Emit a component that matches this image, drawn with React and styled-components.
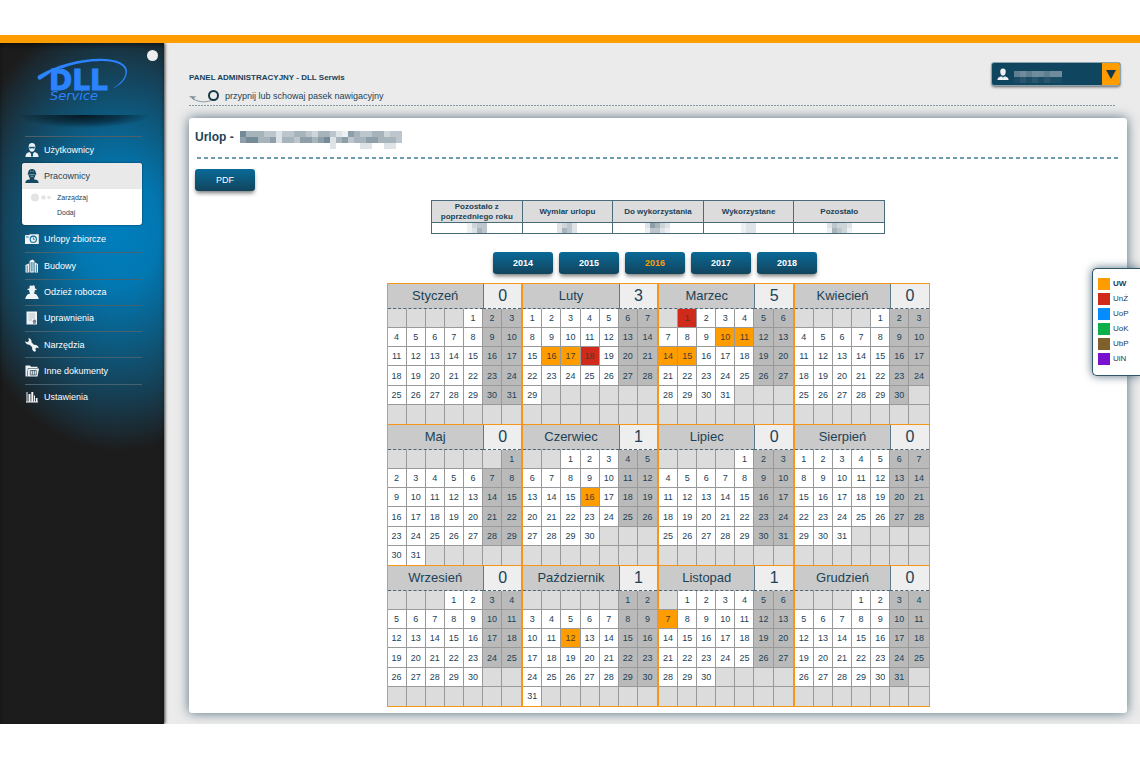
import React from "react";
import styled, { createGlobalStyle, css } from "styled-components";

const ink = "#1b4257";
const orange = "#ff9d00";
const gridOrange = "#f5951a";
const legendColors = {
  UW: orange,
  "UnŻ": "#cf2a1a",
  UoP: "#058cff",
  UoK: "#0bb04a",
  UbP: "#80602a",
  UiN: "#7812cf",
};

const Global = createGlobalStyle`
  * { box-sizing: border-box; }
  body {
    margin: 0;
    background: #fff;
    color: ${ink};
    font: 9px/12px "Liberation Sans", Arial, sans-serif;
  }
  button { font: inherit; color: inherit; border: 0; padding: 0; background: none; cursor: pointer; }
  h1, h2, p, ul { margin: 0; padding: 0; }
  ul { list-style: none; }
  a { color: inherit; text-decoration: none; }
  svg { display: block; flex: none; }
`;

const Page = styled.div`
  padding: 35px 0 36px;
`;

const Frame = styled.div`
  position: relative;
  display: flex;
  border-top: 8px solid ${orange};
  background: #ebebeb;
  overflow: hidden;
`;

const Sidebar = styled.aside`
  position: relative;
  flex: 0 0 164px;
  padding: 14px 22px 0 25px;
  background: radial-gradient(ellipse 160px 220px at 118px 188px, #007ebd 0%, #0278b2 25%, #0c5c83 50%, #163f54 75%, #1b282f 92%, #1c1c1c 100%) #1c1c1c;
  box-shadow: 1px 0 3px rgba(0, 0, 0, 0.75), inset 0 3px 4px rgba(0, 0, 0, 0.4);
`;

const Pin = styled.button`
  position: absolute;
  top: 7px;
  right: 6px;
  width: 11px;
  height: 11px;
  border-radius: 50%;
  background: #eee;
`;

const LogoLink = styled.a`
  display: block;
  margin-left: 11px;
`;

const LogoShade = styled.div`
  height: 14px;
  margin: 10px -10px 7px;
  background: radial-gradient(ellipse 66px 13px at 50% 0, rgba(5, 20, 28, 0.95), rgba(5, 20, 28, 0.5) 60%, transparent 100%);
`;

const Menu = styled.ul`
  border-top: 1px solid #4e5f69;
`;

const MenuItem = styled.li`
  color: #fff;
`;

const MenuLink = styled.a`
  display: flex;
  align-items: center;
  gap: 5px;
  height: 26px;
`;

const MenuRest = styled.ul`
  display: grid;
  grid-auto-rows: 1fr;
  min-height: 184px;
  ${MenuLink} { height: 25px; }
  ${MenuItem} + ${MenuItem} { border-top: 1px solid #47626f; }
`;

const OpenGroup = styled.li`
  margin: 0 0 1px -3px;
  border-radius: 3px;
  overflow: hidden;
  background: #fff;
  color: ${ink};
  box-shadow: 0 0 2px #062c40;
`;

const OpenLink = styled(MenuLink)`
  padding-left: 3px;
  background: #e9e9e9;
`;

const SubList = styled.ul`
  padding: 1px 0 5px 6px;
`;

const SubItem = styled.li`
  display: flex;
  align-items: center;
  height: 15px;
  font-size: 7px;
`;

const Dots = styled.svg`
  width: 23px;
  height: 9px;
  margin-right: 6px;
  fill: #e4e4e4;
  visibility: ${(p) => (p.$on ? "visible" : "hidden")};
`;

const Main = styled.main`
  flex: 1;
  min-width: 0;
  padding: 19px 13px 11px 25px;
`;

const TopBar = styled.header`
  display: flex;
  justify-content: space-between;
  align-items: flex-start;
  margin-right: 11px;
  height: 44px;
  background: repeating-linear-gradient(90deg, #8299a5 0 2px, transparent 2px 3px) bottom / 100% 1px no-repeat;
`;

const PanelName = styled.p`
  padding-top: 10px;
  font-size: 8px;
  font-weight: bold;
`;

const NavHint = styled.button`
  display: flex;
  align-items: center;
  gap: 5px;
  margin-top: 5px;
`;

const UserMenu = styled.button`
  display: flex;
  margin-right: -5px;
  width: 130px;
  height: 24px;
  border: 1px solid #8aa4b1;
  border-radius: 3px;
  overflow: hidden;
  background: #10455f;
  box-shadow: 0 2px 3px -1px rgba(0, 0, 0, 0.6);
`;

const UserName = styled.span`
  flex: 1;
  display: flex;
  align-items: center;
  gap: 5px;
  height: 100%;
  padding-left: 5px;
`;

const Caret = styled.span`
  display: grid;
  place-items: center;
  width: 18px;
  height: 100%;
  background: ${orange};
`;

const Panel = styled.section`
  margin-top: 12px;
  padding: 11px 6px 6px;
  border-radius: 3px;
  background: #fff;
  box-shadow: 0 0 12px #56717f;
`;

const Title = styled.h1`
  display: flex;
  align-items: flex-start;
  gap: 6px;
  height: 28px;
  font-size: 12px;
  line-height: 16px;
  svg { margin-top: 2px; }
`;

const Rule = styled.div`
  height: 2px;
  margin-left: 2px;
  background: repeating-linear-gradient(90deg, #6f9aaf 0 4px, transparent 4px 7px);
`;

const Button = styled.button`
  width: 60px;
  height: 22px;
  border-radius: 3px;
  background: linear-gradient(#096a97, #12445d);
  color: ${(p) => (p.$active ? orange : "#fff")};
  font-weight: ${(p) => (p.$strong ? "bold" : "normal")};
  box-shadow: 0 3px 4px -1px rgba(0, 0, 0, 0.55);
`;

const Actions = styled.div`
  display: flex;
  margin: 10px 0 9px;
`;

const Summary = styled.table`
  width: 454px;
  margin: 0 auto;
  border: solid #4a6b7b;
  border-width: 1px 0 0 1px;
  border-collapse: separate;
  border-spacing: 0;
  table-layout: fixed;
  font-size: 8px;
  line-height: 10px;
  th, td {
    border: solid #4a6b7b;
    border-width: 0 1px 1px 0;
    padding: 0;
  }
  th { height: 22px; background: #dcdcdc; }
  td { height: 11px; }
  svg { margin: 0 auto; }
`;

const Years = styled.nav`
  display: flex;
  justify-content: center;
  gap: 6px;
  margin: 18px 6px 9px 0;
`;

const Calendar = styled.div`
  display: grid;
  grid-template-columns: repeat(4, 1fr);
  width: 543px;
  margin: 0 auto;
  border-bottom: 1px solid ${gridOrange};
`;

const Month = styled.table`
  width: 100%;
  height: 141px;
  border: 1px solid ${gridOrange};
  border-bottom: 0;
  border-collapse: separate;
  border-spacing: 0;
  table-layout: fixed;
  text-align: center;
  th, td { padding: 0; }
`;

const MonthName = styled.th`
  height: 25px;
  background: #cacaca;
  border-bottom: 1px dashed #4a6675;
  font-size: 13px;
  line-height: 16px;
  font-weight: normal;
`;

const MonthCount = styled(MonthName)`
  background: #eee;
  border-left: 1px solid #5b7a89;
  font-size: 16px;
`;

const Day = styled.td`
  height: 19px;
  line-height: 12px;
  border-right: 1px solid #999;
  border-bottom: 1px solid #999;
  background: ${(p) => (p.$mark ? legendColors[p.$mark] : p.$empty ? "#dcdcdc" : p.$weekend ? "#bababa" : "#fff")};
  ${(p) => p.$mark && css`color: #4a3a2c;`}
  &:last-child { border-right: 0; }
  ${(p) => p.$last && css`border-bottom: 0;`}
`;

const Legend = styled.ul`
  position: absolute;
  top: 225px;
  right: 0;
  width: 48px;
  padding: 7px 0 9px 5px;
  border: 1px solid #2f5568;
  border-right: 0;
  border-radius: 5px 0 0 5px;
  background: #fff;
  box-shadow: 0 0 10px #56717f;
`;

const LegendItem = styled.li`
  display: flex;
  align-items: center;
  gap: 3px;
  height: 15px;
  font-size: 8px;
  font-weight: ${(p) => (p.$bold ? "bold" : "normal")};
  &::before {
    content: "";
    width: 12px;
    height: 12px;
    background: ${(p) => p.$color};
  }
`;

// Masked personal data, drawn as a mosaic. Each digit is a tone, "." is blank.
const tones = ["#edf0f2", "#dde3e6", "#cdd5d9", "#bcc6cc", "#a7b4bc", "#8e9fa9", "#768b98"];
const darkTones = ["#1b4c65", "#2a566d", "#3a6378", "#4a6f82", "#5d7f90", "#6e8c9b", "#7d98a5"];

function Mosaic({ rows, cell = 6, dark }) {
  const palette = dark ? darkTones : tones;
  const w = rows[0].length * cell;
  return (
    <svg width={w} height={rows.length * cell} shapeRendering="crispEdges" aria-hidden="true">
      {rows.flatMap((row, y) =>
        [...row].map((c, x) =>
          c === "." ? null : (
            <rect key={`${x}-${y}`} x={x * cell} y={y * cell} width={cell} height={cell} fill={palette[Number(c)]} />
          )
        )
      )}
    </svg>
  );
}

function Logo() {
  return (
    <svg width="94" height="48" viewBox="36 57 94 48" fill="#2b83ff" role="img" aria-label="DLL Service">
      <path d="M38.500 75.500C56 65 80 58.800 100 58.800C118 58.800 127 64 127 71.500C127 78.500 121 85 113 88.500C120 83.500 125.500 78 125.500 72C125.500 65 116 60.800 101 61C88 61.200 74 63.800 62 68.500C59 68.500 52 70.500 49 74L40.500 79.500C38 80.500 36.500 77 38.500 75.500Z" />
      <text x="49" y="90" fontFamily="'DejaVu Sans', sans-serif" fontWeight="bold" fontSize="28" stroke="#2b83ff" strokeWidth="1">DLL</text>
      <text x="50" y="100" fontFamily="'DejaVu Sans', sans-serif" fontStyle="italic" fontSize="13">Service</text>
    </svg>
  );
}

const icons = {
  user: (
    <>
      <path d="M7 0C4.800 0 3.500 1.500 3.700 4C3.800 6.500 5 8.800 7 8.800S10.200 6.500 10.300 4C10.500 1.500 9.200 0 7 0Z" />
      <path d="M0.500 14C0.500 11 1.500 10 4.500 9L7 12L9.500 9C12.500 10 13.500 11 13.500 14Z" />
      <path d="M4.300 3.800H9.700V5.400H7.600L7 4.800L6.400 5.400H4.300Z" fill="#0b5a82" />
      <path d="M6.300 10H7.700L8.200 13L7 14L5.800 13Z" fill="#0b5a82" />
    </>
  ),
  worker: (
    <>
      <path d="M7 0C4.600 0 3.200 1.600 3.200 3.800L2.700 4.500V5.500H3.500C3.800 8 4.800 9.300 5 9.500V10.300C2 10.800 0.300 11.500 0.300 14H13.700C13.700 11.500 12 10.800 9 10.300V9.500C9.200 9.300 10.200 8 10.500 5.500H11.300V4.500L10.800 3.800C10.800 1.600 9.400 0 7 0Z" />
      <path d="M4.500 5.600H9.500M5.800 1.500V3M8.200 1.500V3M5.500 7.300H8.500" stroke="#e9e9e9" strokeWidth="0.500" fill="none" />
    </>
  ),
  camera: (
    <>
      <path d="M0 3.800L0.800 3H4L5 2.300H13.800V12H0Z" />
      <circle cx="8.300" cy="7.200" r="3.100" fill="none" stroke="#076b9e" strokeWidth="1.100" />
      <path d="M8.300 5.500V7.300H9.700M1 5H3.800" stroke="#076b9e" fill="none" strokeWidth="0.900" />
    </>
  ),
  city: (
    <>
      <path d="M0.500 13.500V6L4 4.500V13.500ZM4.600 13.500V2L7.500 0.500L9.500 2V13.500ZM10 13.500V3.500L13 5V13.500Z" />
      <path d="M2.200 6.500V13M6.200 3V12.500M8 3V12.500M11.400 5.500V13" stroke="#0a6593" strokeWidth="0.800" />
    </>
  ),
  clothes: (
    <>
      <path d="M4.300 3.400L4.800 0.800C5.800 0 6.500 0.900 7.200 0.700C8.200 0 9.200 0 9.700 1L10 3.400L11.500 4V5H9.900C9.900 6.800 9.300 7.800 8.800 8.400L11.200 9.300C12.300 10.300 13.200 12 13.800 14H0.200C0.700 12 1.700 10.300 2.800 9.300L5.200 8.400C4.700 7.800 4.100 6.800 4.100 5H2.500V4Z" />
    </>
  ),
  certificate: (
    <>
      <path d="M1.500 0.500H12V13.500H1.500Z" />
      <path d="M3.500 3H10M3.500 5H10M3.500 7H10M3.500 9H7" stroke="#a4b2ba" strokeWidth="0.700" />
      <circle cx="9.500" cy="10.300" r="1.700" fill="#70838e" />
      <path d="M8.500 11L8.100 13.500L9.500 12.500L10.800 13.500L10.400 11Z" fill="#70838e" />
    </>
  ),
  wrench: (
    <path d="M3.300 0.300C5.500 0.300 7 2.200 6.500 4.300L9.200 6.900C11.200 6.600 13.500 8 13.800 10.300L11.600 9.600L10.300 10.800L11 13L9.500 13.800C7.700 13 6.800 11.300 7.200 9.300L4.600 6.700C2.500 7 0.500 5.500 0 3.200L2.400 4.200L4 2.800Z" />
  ),
  folder: (
    <>
      <path d="M0.500 1.500H5L6 2.800H12.500V4H3L1.800 12.500H0.500Z" />
      <path d="M3.300 4.600H14L12.500 12.500H2.300Z" />
      <path d="M5.300 6.500H11.300V11H5.300ZM7.300 6.500V11M9.300 6.500V11" stroke="#3c5360" strokeWidth="0.800" fill="none" />
    </>
  ),
  bars: <path d="M1.500 2H2.500V12.500H1.500ZM3.500 4H5.500V12.500H3.500ZM6.300 2H8.300V12.500H6.300ZM9 5.500H10V12.500H9ZM10.800 8H12.500V12.500H10.800ZM1 11.500H13V12.500H1Z" />,
};

function Icon({ name, fill = "#f0f3f5" }) {
  return (
    <svg width="14" height="14" viewBox="0 0 14 14" fill={fill} aria-hidden="true">
      {icons[name]}
    </svg>
  );
}

const menuAfter = [
  ["camera", "Urlopy zbiorcze"],
  ["city", "Budowy"],
  ["clothes", "Odzież robocza"],
  ["certificate", "Uprawnienia"],
  ["wrench", "Narzędzia"],
  ["folder", "Inne dokumenty"],
  ["bars", "Ustawienia"],
];

const months = [
  ["Styczeń", 0],
  ["Luty", 3, { 16: "UW", 17: "UW", 18: "UnŻ" }],
  ["Marzec", 5, { 1: "UnŻ", 10: "UW", 11: "UW", 14: "UW", 15: "UW" }],
  ["Kwiecień", 0],
  ["Maj", 0],
  ["Czerwiec", 1, { 16: "UW" }],
  ["Lipiec", 0],
  ["Sierpień", 0],
  ["Wrzesień", 0],
  ["Październik", 1, { 12: "UW" }],
  ["Listopad", 1, { 7: "UW" }],
  ["Grudzień", 0],
];

const summary = [
  ["Pozostało z poprzedniego roku", ["0233", "0143"]],
  ["Wymiar urlopu", ["1231", "1431"]],
  ["Do wykorzystania", ["15421", "03310"]],
  ["Wykorzystane", ["011", "011"]],
  ["Pozostało", ["13221", "04320"]],
];

function MonthTable({ year, index }) {
  const [name, count, marks = {}] = months[index];
  const offset = (new Date(year, index, 1).getDay() + 6) % 7;
  const length = new Date(year, index + 1, 0).getDate();
  return (
    <Month>
      <thead>
        <tr>
          <MonthName colSpan={5}>{name}</MonthName>
          <MonthCount colSpan={2}>{count}</MonthCount>
        </tr>
      </thead>
      <tbody>
        {[0, 1, 2, 3, 4, 5].map((week) => (
          <tr key={week}>
            {[0, 1, 2, 3, 4, 5, 6].map((d) => {
              const n = week * 7 + d - offset + 1;
              const inside = n > 0 && n <= length;
              return (
                <Day key={d} $empty={!inside} $weekend={d > 4} $last={week === 5} $mark={inside ? marks[n] : undefined}>
                  {inside ? n : null}
                </Day>
              );
            })}
          </tr>
        ))}
      </tbody>
    </Month>
  );
}

export default function App() {
  return (
    <Page>
      <Global />
      <Frame>
        <Sidebar>
          <Pin aria-label="Przypnij pasek" />
          <LogoLink href="#"><Logo /></LogoLink>
          <LogoShade />
          <nav>
            <Menu>
              <MenuItem>
                <MenuLink href="#"><Icon name="user" />Użytkownicy</MenuLink>
              </MenuItem>
              <OpenGroup>
                <OpenLink href="#"><Icon name="worker" fill="#164a63" />Pracownicy</OpenLink>
                <SubList>
                  {["Zarządzaj", "Dodaj"].map((t, i) => (
                    <SubItem key={t}>
                      <Dots viewBox="0 0 23 9" $on={i === 0} aria-hidden="true">
                        <circle cx="7" cy="4.500" r="4" />
                        <circle cx="15.500" cy="4.500" r="2.300" />
                        <circle cx="21" cy="4.500" r="1.800" />
                      </Dots>
                      <a href="#">{t}</a>
                    </SubItem>
                  ))}
                </SubList>
              </OpenGroup>
            </Menu>
            <MenuRest>
              {menuAfter.map(([icon, label]) => (
                <MenuItem key={label}>
                  <MenuLink href="#"><Icon name={icon} />{label}</MenuLink>
                </MenuItem>
              ))}
            </MenuRest>
          </nav>
        </Sidebar>

        <Main>
          <TopBar>
            <div>
              <PanelName>PANEL ADMINISTRACYJNY - DLL Serwis</PanelName>
              <NavHint>
                <svg width="31" height="14" viewBox="0 0 31 14" fill="none" aria-hidden="true">
                  <circle cx="24.500" cy="6.500" r="4.500" stroke="#163848" strokeWidth="2" />
                  <path d="M3 8.500C7 13 16 14 22 11.500" stroke="#7c909b" strokeWidth="0.900" />
                  <path d="M0 7L7.500 7.500L5 9L5.500 11.500Z" fill="#7c909b" />
                </svg>
                przypnij lub schowaj pasek nawigacyjny
              </NavHint>
            </div>
            <UserMenu aria-label="Menu użytkownika">
              <UserName>
                <svg width="12" height="13" viewBox="0 0 14 14" fill="#eef2f4" aria-hidden="true">
                  <path d="M7 0C4.600 0 3.600 1.700 3.800 4C4 6.500 5.200 8.300 7 8.300S10 6.500 10.200 4C10.400 1.700 9.400 0 7 0ZM0.500 13.500C0.500 11 1.500 10 5 9L7 12L9 9C12.500 10 13.500 11 13.500 13.500Z" />
                  <path d="M6.300 9.500H7.700L8 12.500H6Z" />
                </svg>
                <Mosaic dark rows={["........", "45455455", "01010100"]} />
              </UserName>
              <Caret>
                <svg width="10" height="9" viewBox="0 0 10 9" fill="#15394a"><path d="M0 0H10L5 9Z" /></svg>
              </Caret>
            </UserMenu>
          </TopBar>

          <Panel>
            <Title>
              Urlop -
              <Mosaic rows={["644433133443244310543344233", "566445144355456145344554443", "...............1....11..11."]} />
            </Title>
            <Rule />
            <Actions><Button>PDF</Button></Actions>

            <Summary>
              <thead>
                <tr>{summary.map(([label]) => <th key={label} scope="col">{label}</th>)}</tr>
              </thead>
              <tbody>
                <tr>{summary.map(([label, rows]) => <td key={label}><Mosaic cell={5} rows={rows} /></td>)}</tr>
              </tbody>
            </Summary>

            <Years aria-label="Rok">
              {[2014, 2015, 2016, 2017, 2018].map((y) => (
                <Button key={y} $strong $active={y === 2016}>{y}</Button>
              ))}
            </Years>

            <Calendar>
              {months.map(([name], i) => <MonthTable key={name} year={2016} index={i} />)}
            </Calendar>
          </Panel>
        </Main>

        <Legend>
          {Object.entries(legendColors).map(([code, color], i) => (
            <LegendItem key={code} $color={color} $bold={i === 0}>{code}</LegendItem>
          ))}
        </Legend>
      </Frame>
    </Page>
  );
}
